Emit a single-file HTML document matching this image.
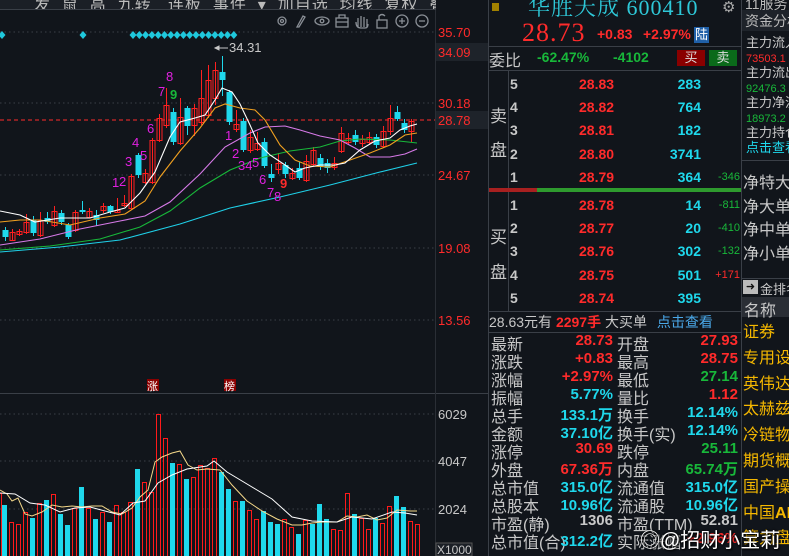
<!DOCTYPE html>
<html><head><meta charset="utf-8">
<style>
*{margin:0;padding:0;box-sizing:border-box}
body{width:789px;height:556px;overflow:hidden;background:#11151b;font-family:"Liberation Sans","Noto Sans CJK SC",sans-serif;position:relative;color:#c8c8c8}
.a{position:absolute;white-space:nowrap}
.r{color:#ff2b2b}.g{color:#18b83a}.c{color:#1fd8ec}.w{color:#c8c8c8}.y{color:#f5b800}
.n{font-weight:bold;font-size:15px}
.lb{font-size:16px;color:#c8c8c8}
</style></head><body>
<div class="a" style="left:0;top:0;width:436px;height:10px;background:#1b1f26;border-bottom:1px solid #3a3f47;overflow:hidden">
<div class="a w" style="left:34px;top:-9px;font-size:16px;letter-spacing:1px;color:#bbb">发 &nbsp;鼠 &nbsp;高 &nbsp;九转 &nbsp;&nbsp;连板 &nbsp;事件 &nbsp;▾ &nbsp;加自选 &nbsp;均线 &nbsp;复权 &nbsp;叠 &nbsp;图 &nbsp;预测 &nbsp;更多 &nbsp;▶ ▾</div>
</div>
<svg class="a" style="left:0;top:0" width="489" height="556" id="ch">
<g stroke="#8a8f96" fill="none" stroke-width="1.3">
<circle cx="282" cy="21" r="4"/><circle cx="282" cy="21" r="1.5"/>
<path d="M297 27 L303 16 L305 17 L299 27 Z"/>
<ellipse cx="322" cy="21" rx="7" ry="4"/><circle cx="322" cy="21" r="1.8"/>
<rect x="336" y="18" width="12" height="9"/><path d="M339 18 v-3 h6 v3 M336 22 h12"/>
<path d="M358 27 v-9 M361 27 v-11 M364 27 v-10 M367 27 v-8 M356 22 q0 6 5 6 h4 q3 0 3 -4"/>
<rect x="377" y="20" width="10" height="8"/><path d="M379 20 v-4 q3 -3 6 0"/>
<circle cx="402" cy="21" r="6"/><path d="M399 21 h6 M402 18 v6"/>
<circle cx="422" cy="21" r="6"/><path d="M419 21 h6"/>
</g>
<g stroke="#3a3f47" stroke-dasharray="1.5 3" stroke-width="1">
<line x1="0" y1="32" x2="435" y2="32"/><line x1="0" y1="103" x2="435" y2="103"/>
<line x1="0" y1="175" x2="435" y2="175"/><line x1="0" y1="248" x2="435" y2="248"/>
<line x1="0" y1="320" x2="435" y2="320"/>
<line x1="0" y1="414" x2="435" y2="414"/><line x1="0" y1="461" x2="435" y2="461"/><line x1="0" y1="509" x2="435" y2="509"/>
</g>
<line x1="0" y1="393.5" x2="489" y2="393.5" stroke="#3a3f47"/>
<line x1="435.5" y1="10" x2="435.5" y2="556" stroke="#2a2e35"/>
<line x1="488.5" y1="0" x2="488.5" y2="556" stroke="#3a3f47"/>
<rect x="436" y="43" width="52" height="18" fill="#1e232a"/>
<rect x="436" y="111" width="52" height="18" fill="#1e232a"/>
<line x1="0" y1="120" x2="435" y2="120" stroke="#ff2b2b" stroke-dasharray="4 3"/>
<g id="diam" fill="#1fc8dc"></g>
<g id="vol"></g>
<g id="cdl"></g>
<g fill="none" stroke-width="1.1">
<polyline stroke="#1fd0e8" points="0,252 60,247 120,240 180,224 230,208 280,197 330,185 380,172 417,163"/>
<polyline stroke="#18b83a" points="0,250 50,246 100,239 140,227 170,211 200,188 230,170 260,158 290,151 320,147 340,141 360,139 390,140 417,143"/>
<polyline stroke="#d77ae8" points="0,245 40,239 80,229 120,221 145,216 170,202 200,174 225,147 250,133 265,127 285,126 300,130 320,136 340,140 355,148 370,157 390,157 405,154 417,149"/>
<polyline stroke="#f0a020" points="0,222 20,220 40,220 70,225 100,218 125,214 145,201 160,177 180,151 200,128 215,108 225,104 240,108 255,110 265,120 280,145 295,160 310,166 330,167 350,160 370,153 390,145 405,135 417,133"/>
<polyline stroke="#ffffff" points="0,211 20,215 35,222 60,218 90,218 110,212 125,208 140,193 155,172 170,137 180,122 195,118 205,115 215,100 222,88 232,92 240,104 250,125 258,143 270,155 285,165 295,172 305,168 320,165 335,165 345,163 360,150 375,141 390,138 400,130 410,126 417,124"/>
</g>
<g fill="none" stroke-width="1">
<polyline stroke="#f5d98a" points="0,490 7,494 12,501 18,498 25,514 32,516 42,512 52,505 62,507 72,506 82,507 92,506 102,506 112,512 122,514 132,508 140,497 148,490 155,462 162,457 172,453 180,451 188,465 197,470 207,469 220,470 232,485 247,501 262,511 277,519 292,525 302,525 312,523 322,522 337,522 347,516 357,517 367,515 377,520 387,518 397,510 410,511 417,511"/>
<polyline stroke="#ffffff" points="0,493 15,494 30,503 45,505 60,512 75,508 90,507 105,511 120,515 133,503 145,501 158,483 172,475 187,469 207,466 214,461 227,472 242,481 257,490 272,499 292,517 312,521 337,522 352,517 372,519 392,512 405,513 417,515"/>
</g>
<g font-family="Liberation Sans" font-size="13">
<text x="166" y="81" fill="#e020e0">8</text><text x="158" y="96" fill="#e020e0">7</text><text x="170" y="99" fill="#18b83a" font-weight="bold">9</text>
<text x="147" y="133" fill="#e020e0">6</text><text x="132" y="147" fill="#e020e0">4</text><text x="140" y="160" fill="#e020e0">5</text>
<text x="125" y="166" fill="#e020e0">3</text><text x="112" y="187" fill="#e020e0">1</text><text x="119" y="186" fill="#e020e0">2</text>
<text x="225" y="140" fill="#e020e0">1</text><text x="232" y="158" fill="#e020e0">2</text><text x="238" y="170" fill="#e020e0">34</text><text x="252" y="167" fill="#e020e0">5</text>
<text x="259" y="184" fill="#e020e0">6</text><text x="280" y="188" fill="#ff2b2b" font-weight="bold">9</text>
<text x="267" y="197" fill="#e020e0">7</text><text x="274" y="201" fill="#e020e0">8</text>
<text x="229" y="52" fill="#c8c8c8">34.31</text>
</g>
<path d="M215 48 h13 M215 48 l4 -2 v4 z" stroke="#c8c8c8" fill="#c8c8c8"/>
<g font-size="13" fill="#ff2b2b">
<text x="438" y="37">35.70</text><text x="438" y="57">34.09</text><text x="438" y="108">30.18</text>
<text x="438" y="125">28.78</text><text x="438" y="180">24.67</text><text x="438" y="253">19.08</text><text x="438" y="325">13.56</text>
</g>
<g font-size="13" fill="#c8c8c8">
<text x="438" y="419">6029</text><text x="438" y="466">4047</text><text x="438" y="514">2024</text>
</g>
<rect x="436" y="543" width="36" height="13" fill="#1b1f26" stroke="#555"/>
<text x="437" y="554" font-size="12" fill="#c8c8c8">X1000</text>
<rect x="147" y="379" width="12" height="12" fill="#8a0000"/><text x="147" y="390" font-size="11" fill="#fff" font-family="Noto Sans CJK SC">涨</text>
<rect x="224" y="379" width="12" height="12" fill="#8a0000"/><text x="224" y="390" font-size="11" fill="#fff" font-family="Noto Sans CJK SC">榜</text>
</svg>
<script>
(function(){
var ns="http://www.w3.org/2000/svg";
function el(p,t,a){var e=document.createElementNS(ns,t);for(var k in a)e.setAttribute(k,a[k]);p.appendChild(e);}
var d=document.getElementById('diam');
var dx=[2,83];for(var i=0;i<17;i++)dx.push(133+i*6.3);
dx.forEach(function(x){el(d,'path',{d:'M'+x+' 31 l3.5 4 l-3.5 4 l-3.5 -4 z'})});
var C=[[5,230,237,227,241,'c'],[12,232,240,229,241,'r'],[19,231,234,229,236,'r'],[26,222,232,214,234,'r'],[33,220,233,216,236,'c'],[40,220,235,212,237,'r'],[47,218,222,212,224,'c'],[54,211,225,206,227,'r'],[61,213,222,210,225,'c'],[68,225,237,223,239,'c'],[75,212,230,210,232,'r'],[82,210,212,201,214,'c'],[89,211,217,208,218,'r'],[96,215,220,210,226,'c'],[103,206,210,203,213,'r'],[110,206,212,205,214,'c'],[117,210,212,198,213,'r'],[124,203,205,195,207,'r'],[131,176,208,174,210,'r'],[138,155,175,153,178,'c'],[145,173,182,169,184,'r'],[152,140,182,138,184,'r'],[159,118,140,114,142,'r'],[166,105,125,88,128,'r'],[173,112,142,108,145,'c'],[180,117,143,98,145,'r'],[187,108,126,106,135,'c'],[194,108,125,104,136,'r'],[201,98,122,70,125,'r'],[208,80,115,65,118,'r'],[215,70,98,62,105,'r'],[222,72,80,56,96,'c'],[229,92,122,90,125,'c'],[236,124,129,110,132,'r'],[243,121,150,118,152,'c'],[250,137,150,130,153,'r'],[257,143,149,132,151,'r'],[264,142,166,138,168,'c'],[271,174,178,164,182,'c'],[278,163,169,153,174,'r'],[285,165,174,162,178,'c'],[292,173,178,168,180,'r'],[299,168,178,162,180,'c'],[306,161,180,155,182,'r'],[313,150,164,147,166,'r'],[320,158,167,154,170,'c'],[327,163,168,159,173,'c'],[334,163,167,157,170,'r'],[341,133,151,127,153,'r'],[348,138,142,133,144,'r'],[355,135,142,130,145,'c'],[362,139,143,135,147,'r'],[369,137,142,132,145,'r'],[376,137,145,134,148,'c'],[383,131,146,126,148,'r'],[390,118,131,105,135,'r'],[397,112,119,106,121,'c'],[404,123,130,119,133,'c'],[411,121,131,119,142,'r']];
var g=document.getElementById('cdl');
C.forEach(function(c){var col=c[5]=='r'?'#ff2020':'#1fd8ec';
el(g,'line',{x1:c[0]+.5,x2:c[0]+.5,y1:c[3],y2:c[4],stroke:col});
if(c[5]=='r')el(g,'rect',{x:c[0]-2,y:c[1]+.5,width:5,height:Math.max(c[2]-c[1],1),fill:'none',stroke:col});
else el(g,'rect',{x:c[0]-2.5,y:c[1],width:6,height:Math.max(c[2]-c[1],1.5),fill:col});});
var V=[505,522,524,512,518,503,500,494,514,525,508,487,508,519,512,522,505,512,502,469,482,492,414,438,463,464,479,477,465,468,458,472,489,501,501,510,519,511,522,524,519,527,534,520,524,504,519,529,530,493,514,518,529,518,523,506,496,507,521,524];
var VK="crrrcrcrccrcrcrcrrrcrrrrcrcrrrrcccrcrrcccrrcrccrrrrcrrrrrccr";
VK="crrrcrcrccrcrcrcrrrcrrrrcrcrrrrccrcrrcccrrcrcccrrrcrrcrrccr";
var vg=document.getElementById('vol');
for(var i=0;i<60;i++){var x=3+i*7;var t=VK.charAt(i)||'r';var vt=V[i]||510;
var col=t=='r'?'#ff1a1a':'#1fd8ec';
if(t=='r')el(vg,'rect',{x:x-.5,y:vt+.5,width:4,height:560-vt,fill:'none',stroke:col});
else el(vg,'rect',{x:x-1,y:vt,width:5,height:560-vt,fill:col});}
el(vg,'rect',{x:-1.5,y:493.5,width:3,height:70,fill:'none',stroke:'#ff1a1a'});
})();
</script>

<div class="a" style="left:489px;top:0;width:252px;height:556px;background:#11151b"></div>
<div class="a" style="left:492px;top:3px;width:7px;height:8px;background:#a08000"></div>
<div class="a" style="left:528px;top:-9px;font-size:22px;color:#2ec8d8;font-family:'Liberation Serif','Noto Serif CJK SC',serif;letter-spacing:1px">华胜天成 600410</div>
<div class="a" style="left:722px;top:-2px;font-size:15px;color:#aaa">⚙</div>
<div class="a r" style="left:522px;top:18px;font-size:26px;font-family:'Liberation Serif',serif;letter-spacing:1px">28.73</div>
<div class="a r n" style="left:597px;top:26px;font-size:14px">+0.83</div>
<div class="a r n" style="left:643px;top:26px;font-size:14px">+2.97%</div>
<div class="a" style="left:694px;top:27px;width:15px;height:16px;background:#2060a8;color:#fff;font-size:13px;text-align:center;line-height:16px">陆</div>
<div class="a" style="left:489px;top:46px;width:252px;border-top:1px solid #3a3f47"></div>
<div class="a lb" style="left:489px;top:47px">委比</div>
<div class="a g n" style="left:537px;top:49px;font-size:14px">-62.47%</div>
<div class="a g n" style="left:613px;top:49px;font-size:14px">-4102</div>
<div class="a" style="left:677px;top:50px;width:28px;height:16px;background:#8a0000;color:#ddd;font-size:13px;text-align:center;line-height:16px">买</div>
<div class="a" style="left:709px;top:50px;width:28px;height:16px;background:#0a6a1a;color:#ddd;font-size:13px;text-align:center;line-height:16px">卖</div>
<div class="a" style="left:489px;top:70px;width:252px;border-top:1px solid #3a3f47"></div>
<div class="a" style="left:508px;top:70px;height:241px;border-left:1px solid #3a3f47"></div>
<div class="a lb" style="left:490px;top:102px;font-size:17px">卖</div>
<div class="a lb" style="left:490px;top:136px;font-size:17px">盘</div>
<div class="a lb" style="left:490px;top:223px;font-size:17px">买</div>
<div class="a lb" style="left:490px;top:258px;font-size:17px">盘</div>
<div class="a" style="left:489px;top:188px;width:48px;height:4px;background:#a82020"></div>
<div class="a" style="left:537px;top:188px;width:204px;height:4px;background:#2e9a2e"></div>
<div id="ob"></div>
<script>
(function(){
var rows=[[76,'5','28.83','283',''],[99,'4','28.82','764',''],[122,'3','28.81','182',''],[146,'2','28.80','3741',''],[169,'1','28.79','364','-346'],
[197,'1','28.78','14','-811'],[220,'2','28.77','20','-410'],[243,'3','28.76','302','-132'],[267,'4','28.75','501','+171'],[290,'5','28.74','395','']];
var h='';rows.forEach(function(r){h+='<div class="a n w" style="left:510px;top:'+r[0]+'px;font-size:14px">'+r[1]+'</div>'+
'<div class="a n r" style="left:579px;top:'+r[0]+'px;font-size:14px">'+r[2]+'</div>'+
'<div class="a n c" style="right:88px;top:'+r[0]+'px;font-size:14px">'+r[3]+'</div>'+
'<div class="a '+(r[4][0]=='+'?'r':'g')+'" style="right:49px;top:'+(r[0]+2)+'px;font-size:11px">'+r[4]+'</div>';});
document.getElementById('ob').innerHTML=h;
})();
</script>
<div class="a" style="left:489px;top:311px;width:252px;border-top:1px solid #3a3f47"></div>
<div class="a" style="left:489px;top:312px;font-size:14px"><span class="w">28.63元有</span> <span class="r n" style="font-size:14px">2297手</span> <span class="w">大买单</span> <span style="color:#4aa8e8;margin-left:6px">点击查看</span></div>
<div class="a" style="left:489px;top:332px;width:252px;border-top:1px solid #3a3f47"></div>
<div id="st"></div>
<script>
(function(){
var S=[['最新','28.73','r','开盘','27.93','r'],['涨跌','+0.83','r','最高','28.75','r'],['涨幅','+2.97%','r','最低','27.14','g'],['振幅','5.77%','c','量比','1.12','r'],
['总手','133.1万','c','换手','12.14%','c'],['金额','37.10亿','c','换手(实)','12.14%','c'],['涨停','30.69','r','跌停','25.11','g'],['外盘','67.36万','r','内盘','65.74万','g'],
['总市值','315.0亿','c','流通值','315.0亿','c'],['总股本','10.96亿','c','流通股','10.96亿','c'],['市盈(静)','1306','w','市盈(TTM)','52.81','w'],['总市值(合)','312.2亿','c','实际涨幅','+2.96%','r']];
var h='';S.forEach(function(s,i){var t=331+i*18;
h+='<div class="a lb" style="left:491px;top:'+t+'px">'+s[0]+'</div><div class="a n '+s[2]+'" style="right:176px;top:'+(t+1)+'px">'+s[1]+'</div>'+
'<div class="a lb" style="left:617px;top:'+t+'px">'+s[3]+'</div><div class="a n '+s[5]+'" style="right:51px;top:'+(t+1)+'px">'+s[4]+'</div>';});
document.getElementById('st').innerHTML=h;
})();
</script>
<div class="a" style="left:741px;top:0;height:556px;border-left:1px solid #3a3f47"></div>
<div class="a" style="left:742px;top:10px;width:47px;height:21px;background:#1e232a"></div>
<div class="a" style="left:745px;top:-6px;font-size:14px;color:#bbb">11服务</div>
<div class="a" style="left:745px;top:11px;font-size:14px;color:#bbb">资金分析</div>
<div class="a" style="left:746px;top:36px;font-size:13px;color:#c8c8c8;line-height:14.5px">主力流入<br><span class="r" style="font-size:11px">73503.1</span><br>主力流出<br><span class="g" style="font-size:11px">92476.3</span><br>主力净流<br><span class="g" style="font-size:11px">18973.2</span><br>主力持仓<br><span class="c">点击查看</span></div>
<div class="a" style="left:742px;top:160px;width:47px;border-top:1px solid #3a3f47"></div>
<div class="a" style="left:743px;top:172px;font-size:16px;color:#c8c8c8;line-height:23.5px">净特大<br>净大单<br>净中单<br>净小单</div>
<div class="a" style="left:742px;top:278px;width:47px;border-top:1px solid #3a3f47"></div>
<div class="a" style="left:743px;top:280px;width:15px;height:14px;background:#bbb;color:#111;font-size:11px;text-align:center">➜</div>
<div class="a" style="left:760px;top:279px;font-size:13px;color:#c8c8c8">金排名</div>
<div class="a" style="left:742px;top:297px;width:47px;height:20px;background:#2a2e35"></div>
<div class="a" style="left:744px;top:297px;font-size:16px;color:#c8c8c8">名称</div>
<div class="a y" style="left:743px;top:320px;font-size:16px;line-height:25.8px">证券<br>专用设<br>英伟达<br>太赫兹<br>冷链物<br>期货概<br>国产操<br>中国<b>AI</b><br>算力盘</div>
<div class="a" style="left:640px;top:524px;font-size:20px;color:#fff;text-shadow:0 0 2px #000,1px 1px 2px #000">◎@招财小宝莉</div>
</body></html>
